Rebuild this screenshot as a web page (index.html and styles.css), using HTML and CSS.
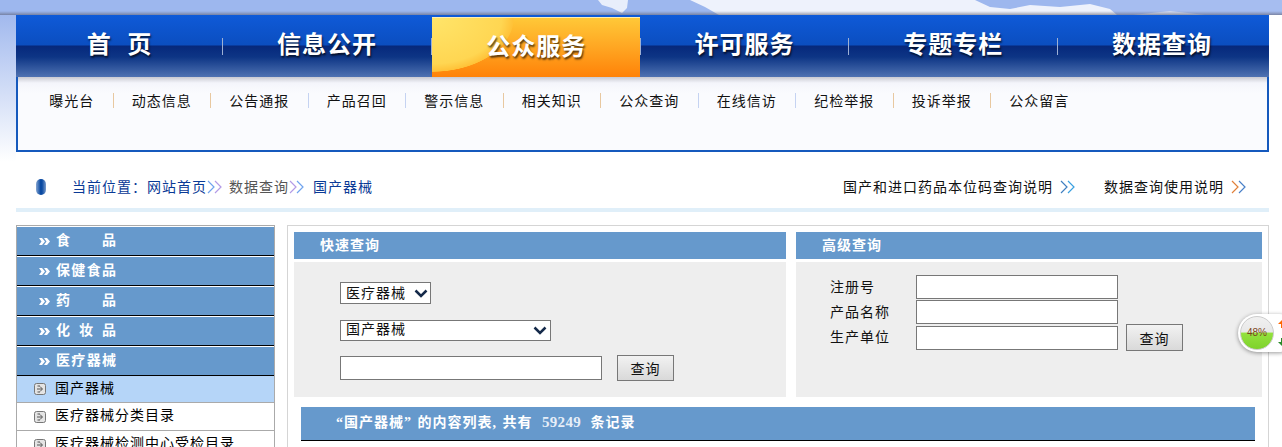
FILE: index.html
```html
<!DOCTYPE html>
<html lang="zh-CN">
<head>
  <meta charset="UTF-8">
  <title>数据查询 - 国产器械</title>
  <link rel="stylesheet" href="styles.css">
</head>
<body>
  <!-- sky / map strip over the nav -->
  <svg class="sky" viewBox="0 0 1282 15" preserveAspectRatio="none">
    <defs>
      <linearGradient id="sky-shade" x1="0" y1="0" x2="0" y2="1">
        <stop offset="0" stop-color="#667" stop-opacity="0"/>
        <stop offset="1" stop-color="#556" stop-opacity=".55"/>
      </linearGradient>
    </defs>
    <rect width="1282" height="15" fill="#9db7ee"/>
    <rect x="1100" width="182" height="15" fill="#a6bdf0"/>
    <path d="M598 0H628L627 8L622 13L612 8L602 5Z" fill="#e8eefb"/>
    <path d="M690 0H975L990 7L1010 9L1030 5L1060 7L1090 4L1110 9L1117 15H719L705 7Z" fill="#eef2fc"/>
    <path d="M1133 15L1170 11L1205 15Z" fill="#d5dff6"/>
    <rect y="11" width="1282" height="4" fill="url(#sky-shade)"/>
  </svg>

  <div class="page">
    <div class="main-nav">
      <a class="nav-item nav-home">首 页</a>
      <a class="nav-item">信息公开</a>
      <a class="nav-item active">公众服务</a>
      <a class="nav-item">许可服务</a>
      <a class="nav-item">专题专栏</a>
      <a class="nav-item">数据查询</a>
    </div>

    <div class="sub-nav">
      <a>曝光台</a>
      <a>动态信息</a>
      <a>公告通报</a>
      <a>产品召回</a>
      <a>警示信息</a>
      <a>相关知识</a>
      <a>公众查询</a>
      <a>在线信访</a>
      <a>纪检举报</a>
      <a>投诉举报</a>
      <a>公众留言</a>
    </div>

    <div class="crumb-bar">
      <span class="loc-dot"></span>
      <a class="crumb">当前位置：网站首页</a>
      <svg class="arr" viewBox="0 0 15 14"><path d="M1 1L7 7L1 13" stroke="#6fa3ee"/><path d="M8 1L14 7L8 13" stroke="#b39be6"/></svg>
      <a class="crumb crumb-grey">数据查询</a>
      <svg class="arr" viewBox="0 0 15 14"><path d="M1 1L7 7L1 13" stroke="#b39be6"/><path d="M8 1L14 7L8 13" stroke="#6fa3ee"/></svg>
      <a class="crumb crumb-last">国产器械</a>
      <a class="help-link">国产和进口药品本位码查询说明</a>
      <svg class="arr" viewBox="0 0 15 14"><path d="M1 1L7 7L1 13" stroke="#3f7fc0"/><path d="M8 1L14 7L8 13" stroke="#3aa0e0"/></svg>
      <a class="help-link help-second">数据查询使用说明</a>
      <svg class="arr" viewBox="0 0 15 14"><path d="M1 1L7 7L1 13" stroke="#e0803a"/><path d="M8 1L14 7L8 13" stroke="#4a80c8"/></svg>
    </div>
    <div class="rule"></div>

    <div class="content">
      <div class="side-menu">
        <a class="side-head"><svg class="head-icon" viewBox="0 0 11 7"><path d="M0 0H3L6 3.5L3 7H0L2.5 3.5ZM5 0H8L11 3.5L8 7H5L7.5 3.5Z"/></svg><span class="side-title">食 品</span></a>
        <a class="side-head"><svg class="head-icon" viewBox="0 0 11 7"><path d="M0 0H3L6 3.5L3 7H0L2.5 3.5ZM5 0H8L11 3.5L8 7H5L7.5 3.5Z"/></svg><span class="side-title">保健食品</span></a>
        <a class="side-head"><svg class="head-icon" viewBox="0 0 11 7"><path d="M0 0H3L6 3.5L3 7H0L2.5 3.5ZM5 0H8L11 3.5L8 7H5L7.5 3.5Z"/></svg><span class="side-title">药 品</span></a>
        <a class="side-head"><svg class="head-icon" viewBox="0 0 11 7"><path d="M0 0H3L6 3.5L3 7H0L2.5 3.5ZM5 0H8L11 3.5L8 7H5L7.5 3.5Z"/></svg><span class="side-title">化 妆 品</span></a>
        <a class="side-head"><svg class="head-icon" viewBox="0 0 11 7"><path d="M0 0H3L6 3.5L3 7H0L2.5 3.5ZM5 0H8L11 3.5L8 7H5L7.5 3.5Z"/></svg><span class="side-title">医疗器械</span></a>
        <a class="sub-item current"><svg class="item-icon" viewBox="0 0 12 12"><rect x=".5" y=".5" width="11" height="11" rx="2" fill="#e4e4e4" stroke="#777"/><path d="M3 6H8M6 3.5L8.5 6L6 8.5M3.5 3H6M3.5 9H6" fill="none" stroke="#555"/></svg><span>国产器械</span></a>
        <a class="sub-item"><svg class="item-icon" viewBox="0 0 12 12"><rect x=".5" y=".5" width="11" height="11" rx="2" fill="#e4e4e4" stroke="#777"/><path d="M3 6H8M6 3.5L8.5 6L6 8.5M3.5 3H6M3.5 9H6" fill="none" stroke="#555"/></svg><span>医疗器械分类目录</span></a>
        <a class="sub-item"><svg class="item-icon" viewBox="0 0 12 12"><rect x=".5" y=".5" width="11" height="11" rx="2" fill="#e4e4e4" stroke="#777"/><path d="M3 6H8M6 3.5L8.5 6L6 8.5M3.5 3H6M3.5 9H6" fill="none" stroke="#555"/></svg><span>医疗器械检测中心受检目录</span></a>
      </div>

      <div class="results">
        <div class="search-panels">
          <div class="panel">
            <div class="panel-title">快速查询</div>
            <form class="panel-body quick-form">
              <select class="field sel-type"><option>医疗器械</option></select>
              <select class="field sel-sub"><option>国产器械</option></select>
              <div class="quick-row">
                <input class="field quick-input" type="text">
                <button class="query-btn" type="button">查询</button>
              </div>
            </form>
          </div>
          <div class="panel">
            <div class="panel-title">高级查询</div>
            <form class="panel-body adv-form">
              <label>注册号</label>
              <input class="field" type="text">
              <label>产品名称</label>
              <input class="field" type="text">
              <label class="last-row">生产单位</label>
              <input class="field last-row" type="text">
              <button class="query-btn" type="button">查询</button>
            </form>
          </div>
        </div>
        <div class="list-head">“国产器械” 的内容列表, 共有 <b class="count">59249</b> 条记录</div>
      </div>
    </div>
  </div>

  <!-- floating speed ball, sits over the page -->
  <div class="speed-ball">
    <div class="ball"><span>48%</span></div>
    <svg class="ball-arrows" viewBox="0 0 8 26"><path d="M4 0L8 4H5V8H3V4H0Z" fill="#f60"/><path d="M3 18H5V22H8L4 26L0 22H3Z" fill="#2a8a2a"/></svg>
  </div>
</body>
</html>
```

FILE: styles.css
```css
html, body {
  height: 447px;
  margin: 0;
  overflow: hidden;
}
body {
  position: relative;
  font-family: "Noto Sans CJK SC", "Liberation Sans", sans-serif;
  font-size: 14px;
  letter-spacing: 1px;
  color: #000;
  background: #fff linear-gradient(#98b2ec, #fff) 0 0 / 16px 162px no-repeat;
}
.sky {
  display: block;
  width: 100%;
  height: 15px;
}
.page {
  margin: 0 13px 0 16px;
}

/* Main nav */
.main-nav {
  display: grid;
  grid-template-columns: 206px repeat(5, 208.8px);
  height: 62px;
  background: linear-gradient(#0f5ad8 0, #0b4ec0 30px, #06287c 31px, #0d3585 42px, #4f72b2 62px);
}
.nav-item {
  position: relative;
  box-sizing: border-box;
  display: flex;
  align-items: center;
  justify-content: center;
  padding: 0 0 7px 1px;
  color: #fff;
  font-size: 24px;
  font-weight: 700;
  letter-spacing: 1px;
  text-shadow: 1px 2px 2px #000a;
}
.nav-item + .nav-item::before {
  content: "";
  position: absolute;
  left: 0;
  top: 23px;
  width: 1px;
  height: 17px;
  background: #9db0d4;
}
.nav-home {
  word-spacing: 9px;
}
.nav-item.active {
  margin: 2px 0 0 1px;
  padding-bottom: 6px;
  border-top: 1px solid #ffeeb0;
  background:
    radial-gradient(ellipse 82px 54px at 0 0, #ffe56a 0, #ffd652 85%, #ffc238 99%, transparent 100%),
    linear-gradient(#ffc838, #ffa622 50%, #ff8208);
}
.nav-item.active::before {
  left: -1px;
  top: 20px;
}

/* Sub nav */
.sub-nav {
  display: flex;
  align-items: flex-start;
  height: 57px;
  padding: 16px 0 0 13px;
  border: 2px solid #1559bd;
  border-top: 0;
  background: linear-gradient(#c9cad2 0, #f4f5fb 6px, #fafbfe 16px);
}
.sub-nav a {
  height: 15px;
  padding: 0 18.25px;
  line-height: 15px;
  color: #111;
  border-right: 1px solid #c5d3f2;
}
.sub-nav a:nth-child(4n+1),
.sub-nav a:nth-child(4n+2) {
  border-right-color: #e8c8a0;
}
.sub-nav a:last-child {
  border-right: 0;
}

/* Breadcrumb row */
.crumb-bar {
  display: flex;
  align-items: center;
  height: 18px;
  padding: 25px 23px 13px 20px;
}
.loc-dot {
  width: 10px;
  height: 16px;
  margin: 2px 26px 0 0;
  border-radius: 5px;
  background: linear-gradient(90deg, #86a6d2, #0a4aa2 45%, #0a4aa2 60%, #7a9ccc);
}
.crumb {
  color: #0a3a96;
}
.crumb-grey {
  margin-left: 7px;
  color: #555;
}
.crumb-last {
  margin-left: 9px;
}
.arr {
  flex: none;
  width: 15px;
  height: 14px;
  margin-top: 2px;
  fill: none;
  stroke-width: 1.2;
}
.help-link {
  margin-right: 7px;
  color: #111;
}
.crumb-last + .help-link {
  margin-left: auto;
}
.help-second {
  margin-left: 29px;
}
.rule {
  height: 4px;
  background: #e0eff9;
}

/* Content */
.content {
  display: flex;
  gap: 12px;
  margin-top: 13px;
}

/* Left menu */
.side-menu {
  width: 257px;
  height: 240px;
  border: 1px solid #aaa;
  border-bottom: 0;
}
.side-head {
  display: flex;
  align-items: center;
  height: 28px;
  margin-top: 1px;
  padding-left: 22px;
  background: #6699cc;
  border-bottom: 1px solid #000;
  color: #fff;
  font-weight: 700;
}
.head-icon {
  width: 11px;
  height: 7px;
  margin-right: 6px;
  fill: #fff;
}
.side-title {
  width: 60px;
  padding-bottom: 5px;
  letter-spacing: 0;
  text-align: justify;
  text-align-last: justify;
}
.sub-item {
  display: flex;
  align-items: center;
  height: 27px;
  padding-left: 17px;
  border-bottom: 1px solid #aaa;
}
.sub-item span {
  padding-bottom: 5px;
}
.sub-item.current {
  height: 26px;
  background: #b5d5f8;
}
.item-icon {
  width: 12px;
  height: 12px;
  margin-right: 9px;
}

/* Right side */
.results {
  width: 968px;
  height: 222px;
  padding: 6px;
  border: 1px solid #d5d5d5;
  border-bottom: 0;
  background: #fff;
}
.search-panels {
  display: grid;
  grid-template-columns: 492px 466px;
  gap: 10px;
}
.panel-title {
  height: 27px;
  padding-left: 26px;
  line-height: 24px;
  background: #6699cc;
  color: #fff;
  font-weight: 700;
}
.panel-body {
  box-sizing: border-box;
  height: 135px;
  margin-top: 3px;
  background: #eee;
}
.field {
  box-sizing: border-box;
  display: block;
  margin: 0;
  height: 24px;
  border: 1px solid #777;
  border-radius: 0;
  background: #fff;
  font: inherit;
  letter-spacing: 1px;
  color: #111;
}
select.field {
  appearance: none;
  padding: 0 0 2px 5px;
  line-height: 15px;
  background: #fff url("data:image/svg+xml,%3Csvg xmlns='http://www.w3.org/2000/svg' width='14' height='9'%3E%3Cpath d='M1.5 1.5L7 7L12.5 1.5' fill='none' stroke='%23152a4a' stroke-width='2.5'/%3E%3C/svg%3E") no-repeat;
}
.quick-form {
  padding: 20px 0 0 46px;
}
select.sel-type {
  width: 91px;
  height: 22px;
  margin-bottom: 16px;
  background-position: right 2px center;
}
select.sel-sub {
  width: 211px;
  height: 21px;
  margin-bottom: 14px;
  padding-bottom: 4px;
  background-position: right 3px center;
}
.quick-row {
  display: flex;
  align-items: center;
  gap: 15px;
}
.quick-input {
  width: 262px;
}
.query-btn {
  box-sizing: border-box;
  width: 57px;
  height: 26px;
  padding: 0;
  border: 1px solid #777;
  background: linear-gradient(#f2f2f2, #d9d9d9);
  font: inherit;
  letter-spacing: 1px;
  color: #111;
}
.adv-form {
  display: grid;
  grid-template-columns: 86px 202px 65px;
  grid-auto-rows: 24px;
  row-gap: 1px;
  align-items: center;
  padding: 13px 0 0 34px;
}
.adv-form label {
  grid-column: 1;
  padding-bottom: 3px;
  line-height: 18px;
  color: #111;
}
.adv-form .field {
  grid-column: 2;
}
.adv-form .last-row {
  margin-top: 1px;
}
.adv-form .query-btn {
  grid-column: 3;
  grid-row: 3;
  align-self: start;
  height: 27px;
  margin: -1px 0 0 8px;
}
.list-head {
  height: 33px;
  margin: 10px 7px 0;
  padding-left: 35px;
  line-height: 31px;
  background: #6699cc;
  border-bottom: 1px solid #000;
  color: #fff;
  font-family: "Liberation Serif", "Noto Sans CJK SC", serif;
  font-weight: 700;
  letter-spacing: 1px;
  word-spacing: 1px;
}
.count {
  margin: 0 4px;
  color: #e6eef8;
  font-size: 15px;
  letter-spacing: .3px;
}

/* Floating ball */
.speed-ball {
  position: absolute;
  left: 1238px;
  top: 314px;
  display: flex;
  align-items: center;
  width: 60px;
  height: 38px;
  border-radius: 19px;
  background: #fff;
  box-shadow: 0 1px 4px #0006;
}
.ball {
  flex: none;
  box-sizing: border-box;
  width: 34px;
  height: 34px;
  margin-left: 2px;
  border: 1px solid #ccc;
  border-radius: 50%;
  background: linear-gradient(#f0f0f0 0, #e8e8e8 48%, #94e23e 49%, #7ed22c 100%);
  text-align: center;
}
.ball span {
  font: 10px/32px "Liberation Sans", sans-serif;
  letter-spacing: 0;
  color: #7a4420;
}
.ball-arrows {
  flex: none;
  width: 8px;
  height: 26px;
  margin-left: 4px;
}
```
